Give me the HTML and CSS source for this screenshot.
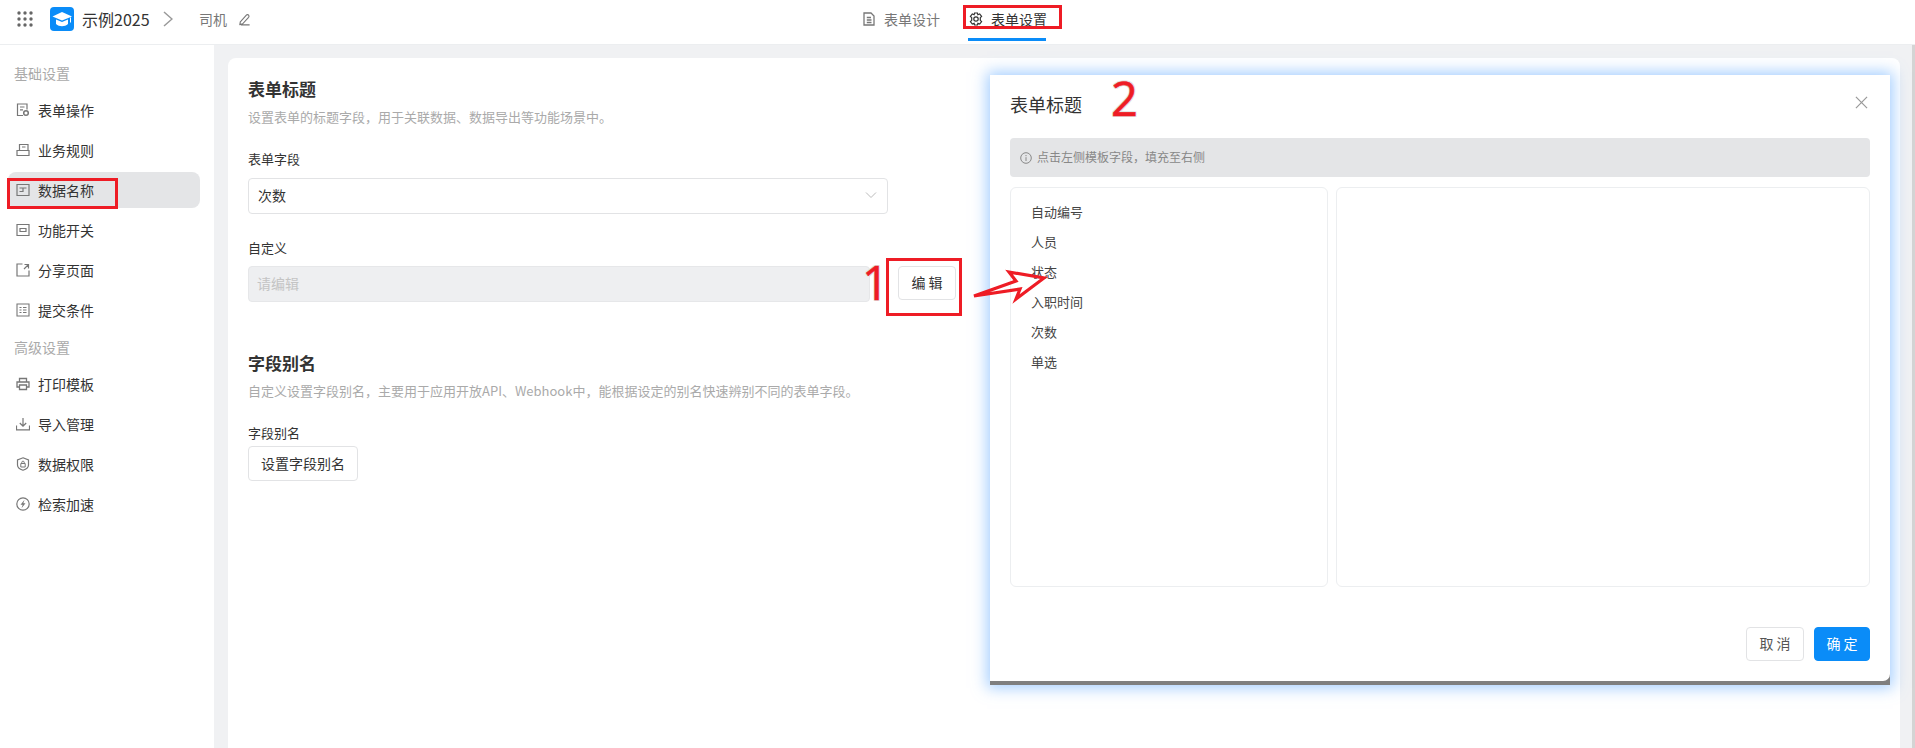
FILE: index.html
```html
<!DOCTYPE html>
<html lang="zh-CN">
<head>
<meta charset="utf-8">
<title>表单设置</title>
<link rel="stylesheet" href="styles.css">
</head>
<body>
<header class="topbar">
  <div class="crumbs">
    <svg class="apps" viewBox="0 0 16 16"><g fill="#666"><circle cx="2" cy="2" r="1.7"/><circle cx="8" cy="2" r="1.7"/><circle cx="14" cy="2" r="1.7"/><circle cx="2" cy="8" r="1.7"/><circle cx="8" cy="8" r="1.7"/><circle cx="14" cy="8" r="1.7"/><circle cx="2" cy="14" r="1.7"/><circle cx="8" cy="14" r="1.7"/><circle cx="14" cy="14" r="1.7"/></g></svg>
    <span class="logo"><svg viewBox="0 0 24 24" width="24" height="24"><path fill="#fff" d="M12 5 22 9.500 12 13.500 2.500 9.500Z"/><path fill="#fff" d="M6 12.500 12 15 18 12.500V17C16.500 18.500 14 19.200 12 19.200S7.500 18.500 6 17Z"/><path fill="#fff" d="M20 10.500H21V15.500H20Z"/></svg></span>
    <span class="app-name">示例2025</span>
    <svg class="chev" viewBox="0 0 10 16"><path d="M1 1 9 8 1 15" fill="none" stroke="#999" stroke-width="1.500"/></svg>
    <span class="form-name">司机</span>
    <svg class="pencil" viewBox="0 0 14 14"><path d="M2.500 9.500 9 2.200C9.700 1.500 10.800 1.600 11.400 2.300 12 3 12 3.900 11.400 4.600L5 11.600 2 12.300ZM3 12.800H12.500" fill="none" stroke="#777" stroke-width="1.200"/></svg>
  </div>
  <nav class="tabs">
    <a class="tab">
      <svg class="tab-icon" viewBox="0 0 14 14"><path d="M2 1H9L12 4V13H2ZM4.800 5.500H9M4.800 8H9.500M4.800 10.500H9.500" fill="none" stroke="#777" stroke-width="1.300"/></svg>
      表单设计
    </a>
    <a class="tab active">
      <svg class="tab-icon" viewBox="0 0 14 14"><path d="M5.600 1H8.400L8.900 2.700 10.700 2 12.600 4.400 11.300 5.700V8.300L12.600 9.600 10.700 12 8.900 11.300 8.400 13H5.600L5.100 11.300 3.300 12 1.400 9.600 2.700 8.300V5.700L1.400 4.400 3.300 2 5.100 2.700Z" fill="none" stroke="#333" stroke-width="1.200"/><circle cx="7" cy="7" r="2.200" fill="none" stroke="#333" stroke-width="1.200"/></svg>
      表单设置
    </a>
  </nav>
</header>

<div class="layout">
  <aside class="sidebar">
    <div class="side-label">基础设置</div>
    <a class="side-item"><svg viewBox="0 0 14 14"><path d="M7 12.500H1.500V1H11V6.500M4 4H8.500M4 6.800H7" fill="none" stroke="#777" stroke-width="1.200"/><circle cx="10" cy="10" r="2.300" fill="none" stroke="#777" stroke-width="1.500"/></svg>表单操作</a>
    <a class="side-item"><svg viewBox="0 0 14 14"><path d="M3.500 7V1.500H12V7M1 7.500H13V12.500H1ZM6 4H9.500" fill="none" stroke="#777" stroke-width="1.200"/></svg>业务规则</a>
    <a class="side-item selected"><svg viewBox="0 0 14 14"><path d="M1 1.500H13V12.500H1ZM3.500 5H10.500M3.500 8.500H6.500M7 5V9" fill="none" stroke="#777" stroke-width="1.200"/></svg>数据名称</a>
    <a class="side-item"><svg viewBox="0 0 14 14"><path d="M1 1.500H13V12.500H1ZM4 5.500H10V8.500H4Z" fill="none" stroke="#777" stroke-width="1.200"/></svg>功能开关</a>
    <a class="side-item"><svg viewBox="0 0 14 14"><path d="M6.500 1H1V13H13V7.500M8 6 12.500 1.500M8.500 1.500H12.500V5.500" fill="none" stroke="#777" stroke-width="1.200"/></svg>分享页面</a>
    <a class="side-item"><svg viewBox="0 0 14 14"><path d="M1 1H13V13H1ZM3.500 4.500H5.500M7 4.500H10.500M3.500 7H5.500M7 7H10.500M3.500 9.500H5.500M7 9.500H10.500" fill="none" stroke="#777" stroke-width="1.100"/></svg>提交条件</a>
    <div class="side-label">高级设置</div>
    <a class="side-item"><svg viewBox="0 0 14 14"><path d="M3.500 5V1.500H10.500V5M3.500 10H1V5H13V10H10.500M3.500 8H10.500V12.500H3.500Z" fill="none" stroke="#777" stroke-width="1.300"/></svg>打印模板</a>
    <a class="side-item"><svg viewBox="0 0 14 14"><path d="M7 1V9M3.800 6 7 9.200 10.200 6M0.500 8.500V12.800H13.500V8.500" fill="none" stroke="#777" stroke-width="1.200"/></svg>导入管理</a>
    <a class="side-item"><svg viewBox="0 0 14 14"><path d="M7 0.800 12.500 3V8C12.500 10.500 9.500 12.500 7 13.300 4.500 12.500 1.500 10.500 1.500 8V3Z" fill="none" stroke="#777" stroke-width="1.200"/><path d="M4.800 6.500H9.200V10H4.800ZM5.800 6.500V5.200C5.800 3.800 8.200 3.800 8.200 5.200V6.500" fill="none" stroke="#777"/></svg>数据权限</a>
    <a class="side-item"><svg viewBox="0 0 14 14"><circle cx="7" cy="7" r="6.200" fill="none" stroke="#777" stroke-width="1.200"/><path d="M8.500 2.800 4.500 7.800H6.700L5.500 11.200 9.500 6.200H7.300Z" fill="#777"/></svg>检索加速</a>
  </aside>

  <main class="workspace">
    <section class="card">
      <h2 class="sec-title">表单标题</h2>
      <p class="sec-desc">设置表单的标题字段&#65292;用于关联数据、数据导出等功能场景中。</p>
      <label class="field-label">表单字段</label>
      <div class="select">
        <span>次数</span>
        <svg class="caret" viewBox="0 0 12 8"><path d="M1 1.500 6 6.500 11 1.500" fill="none" stroke="#bbb" stroke-width="1"/></svg>
      </div>
      <label class="field-label custom">自定义</label>
      <div class="edit-row">
        <div class="input-disabled">请编辑</div>
        <button class="btn btn-edit">编 辑</button>
      </div>
      <h2 class="sec-title second">字段别名</h2>
      <p class="sec-desc">自定义设置字段别名&#65292;主要用于应用开放API、Webhook中&#65292;能根据设定的别名快速辨别不同的表单字段。</p>
      <label class="field-label alias">字段别名</label>
      <button class="btn btn-alias">设置字段别名</button>
    </section>
  </main>
  <div class="scrollbar"></div>
</div>

<div class="modal">
  <div class="modal-inner">
    <div class="modal-head">
      <span class="modal-title">表单标题</span>
      <svg class="close" viewBox="0 0 14 14"><path d="M1 1 13 13M13 1 1 13" stroke="#999" stroke-width="1.300"/></svg>
    </div>
    <div class="notice">
      <svg viewBox="0 0 12 12" class="info"><circle cx="6" cy="6" r="5.300" fill="none" stroke="#888"/><path d="M6 5.200V9M6 3V4.200" stroke="#888"/></svg>
      <span>点击左侧模板字段&#65292;填充至右侧</span>
    </div>
    <div class="panels">
      <ul class="panel panel-left">
        <li>自动编号</li>
        <li>人员</li>
        <li>状态</li>
        <li>入职时间</li>
        <li>次数</li>
        <li>单选</li>
      </ul>
      <div class="panel panel-right"></div>
    </div>
    <div class="modal-foot">
      <button class="btn btn-cancel">取 消</button>
      <button class="btn btn-ok">确 定</button>
    </div>
  </div>
</div>

<div class="mark mark-side"></div>
<div class="mark mark-tab"></div>
<div class="mark mark-edit"></div>
<span class="digit digit-one">1</span>
<span class="digit digit-two">2</span>
<svg class="arrow" viewBox="0 0 90 40" width="90" height="40"><path d="M3 32 45 17 38 8 73 14 45 35 49 25Z" fill="none" stroke="#ee1c25" stroke-width="3.200" stroke-linejoin="miter"/></svg>
</body>
</html>
```

FILE: styles.css
```css
* { box-sizing: border-box; }
html, body { margin: 0; height: 100%; }
body {
  position: relative;
  width: 1915px;
  height: 748px;
  overflow: hidden;
  display: flex;
  flex-direction: column;
  background: #fff;
  color: #333;
  font-family: "Noto Sans CJK SC", "Noto Sans", sans-serif;
  font-size: 14px;
}
.topbar {
  position: relative;
  flex: none;
  height: 45px;
  display: flex;
  align-items: flex-start;
  justify-content: flex-start;
  background: #fff;
  border-bottom: 1px solid #eceef0;
}
.crumbs {
  display: flex;
  align-items: center;
  height: 38px;
  padding-left: 17px;
}
.apps { width: 16px; height: 16px; margin-right: 17px; }
.logo {
  width: 24px;
  height: 24px;
  border-radius: 4px;
  background: #0a8cf8;
  display: block;
  margin-right: 8px;
}
.logo svg { display: block; }
.app-name { font-size: 16px; color: #333; width: 81px; }
.chev { width: 10px; height: 16px; margin-right: 26px; }
.form-name { color: #777; margin-right: 11px; }
.pencil { width: 13px; height: 13px; }
.tabs {
  display: flex;
  margin-left: 610px;
  gap: 29px;
  height: 44px;
}
.tab {
  width: 78px;
  height: 41px;
  display: flex;
  align-items: center;
  gap: 8px;
  padding: 0 0 4px 1px;
  color: #777;
  font-size: 14px;
  white-space: nowrap;
}
.tab.active { color: #333; border-bottom: 3px solid #0a8cf8; padding-bottom: 1px; }
.tab-icon { width: 14px; height: 14px; flex: none; }

.layout { flex: 1; display: flex; min-height: 0; }
.sidebar {
  flex: none;
  width: 214px;
  padding: 13px 14px 0 8px;
  background: #fff;
}
.side-label {
  height: 30px;
  line-height: 30px;
  padding-left: 6px;
  color: #aaa;
  margin-bottom: 4px;
}
.side-item {
  height: 36px;
  margin-bottom: 4px;
  display: flex;
  align-items: center;
  gap: 8px;
  padding-left: 8px;
  border-radius: 8px;
  color: #333;
}
.side-item svg { width: 14px; height: 14px; flex: none; }
.side-item.selected { background: #e4e5e7; }

.workspace {
  flex: 1;
  min-width: 0;
  padding: 13px 12px 0 14px;
  background: #f0f1f3;
}
.card {
  height: 100%;
  padding: 19px 20px;
  background: #fff;
  border-radius: 8px 8px 0 0;
}
.scrollbar { flex: none; width: 3px; background: #d4d4d4; }
.sec-title {
  margin: 0;
  font-size: 17px;
  line-height: 24px;
  font-weight: 700;
  color: #333;
}
.sec-title.second { margin-top: 49px; }
.sec-desc {
  margin: 6px 0 0;
  font-size: 13px;
  line-height: 20px;
  color: #aaa;
}
.field-label {
  display: block;
  margin-top: 22px;
  font-size: 13px;
  line-height: 20px;
  color: #333;
}
.field-label.custom { margin-top: 24px; }
.field-label.alias { margin-top: 23px; line-height: 18px; }
.select {
  width: 640px;
  height: 36px;
  margin-top: 9px;
  padding: 0 10px 2px 9px;
  display: flex;
  align-items: center;
  justify-content: space-between;
  border: 1px solid #e2e3e5;
  border-radius: 4px;
  font-size: 14px;
}
.caret { width: 12px; height: 8px; }
.edit-row { display: flex; align-items: flex-start; gap: 28px; margin-top: 8px; }
.input-disabled {
  width: 622px;
  height: 36px;
  line-height: 32px;
  padding-left: 8px;
  background: #eeeff1;
  border: 1px solid #e6e7e9;
  border-radius: 4px;
  color: #c4c4c4;
}
.btn {
  font-family: inherit;
  font-size: 14px;
  color: #333;
  background: #fff;
  border: 1px solid #e2e3e5;
  border-radius: 4px;
  padding: 0 0 2px;
}
.btn-edit { width: 58px; height: 34px; }
.btn-alias { display: block; width: 110px; height: 35px; margin-top: 4px; }

.modal {
  position: absolute;
  left: 990px;
  top: 75px;
  width: 900px;
  height: 610px;
  padding-bottom: 4px;
  background: #7f7f7f;
  box-shadow: 0 0 14px 3px rgba(90, 165, 255, .55);
}
.modal-inner {
  height: 100%;
  padding: 0 20px;
  display: flex;
  flex-direction: column;
  background: #fff;
  border-bottom-right-radius: 7px;
}
.modal-head {
  flex: none;
  height: 63px;
  display: flex;
  align-items: center;
  justify-content: space-between;
  padding: 0 2px 5px 0;
}
.modal-title { font-size: 18px; color: #333; }
.close { width: 13px; height: 13px; margin-top: -3px; }
.notice {
  flex: none;
  height: 39px;
  display: flex;
  align-items: center;
  gap: 5px;
  padding-left: 10px;
  background: #e4e5e7;
  border-radius: 4px;
  font-size: 12px;
  color: #888;
}
.notice span { margin-top: -2px; }
.info { width: 12px; height: 12px; }
.panels { flex: none; display: flex; gap: 8px; margin-top: 10px; height: 400px; }
.panel {
  margin: 0;
  list-style: none;
  border: 1px solid #eceef0;
  border-radius: 6px;
}
.panel-left { width: 318px; padding: 9px 20px; }
.panel-left li { height: 30px; line-height: 30px; font-size: 13px; color: #444; }
.panel-right { flex: 1; }
.modal-foot {
  flex: none;
  display: flex;
  justify-content: flex-end;
  gap: 10px;
  margin-top: 40px;
}
.btn-cancel { width: 58px; height: 34px; color: #555; }
.btn-ok { width: 56px; height: 34px; color: #fff; background: #0a8cf8; border-color: #0a8cf8; }

.mark {
  position: absolute;
  border: 3px solid #ee1c25;
}
.mark-side { left: 7px; top: 178px; width: 111px; height: 31px; }
.mark-tab { left: 963px; top: 5px; width: 99px; height: 24px; }
.mark-edit { left: 886px; top: 258px; width: 76px; height: 58px; }
.digit {
  position: absolute;
  font-family: "Open Sans", "Noto Sans", sans-serif;
  font-size: 47px;
  font-weight: 400;
  line-height: 47px;
  color: #ee1c25;
  -webkit-text-stroke: 0.6px #ee1c25;
  text-shadow: 1px 1px 0 #e2e2e2, -1px -1px 0 #e2e2e2, 1px -1px 0 #e2e2e2, -1px 1px 0 #e2e2e2;
}
.digit-one { left: 862px; top: 259px; }
.digit-two { left: 1111px; top: 75px; }
.arrow { position: absolute; left: 971px; top: 264px; }
```
